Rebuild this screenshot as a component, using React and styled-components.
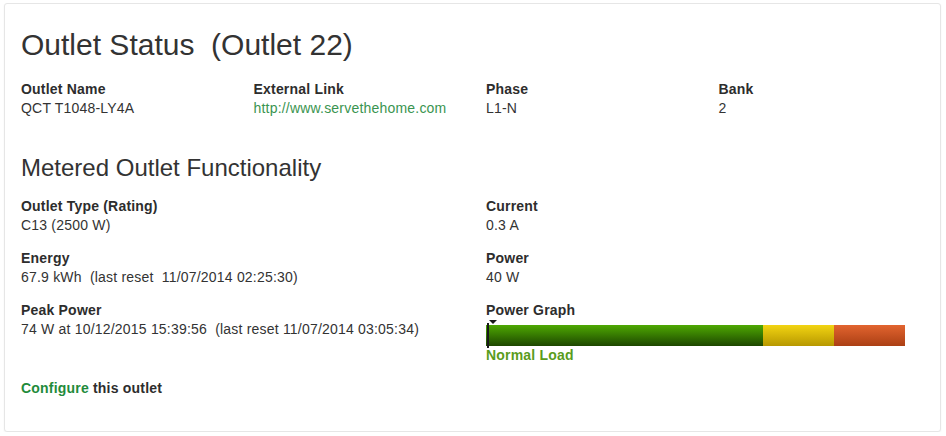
import React from "react";
import styled, { createGlobalStyle } from "styled-components";

const GlobalStyle = createGlobalStyle`
  html, body {
    margin: 0;
    padding: 0;
    background: #fff;
  }
  body {
    font-family: "Liberation Sans", Arial, sans-serif;
    font-size: 14px;
    color: #333;
  }
`;

const topFields = [
  { label: "Outlet Name", value: "QCT T1048-LY4A" },
  { label: "External Link", value: "http://www.servethehome.com", link: true },
  { label: "Phase", value: "L1-N" },
  { label: "Bank", value: "2" },
];

const leftFields = [
  { label: "Outlet Type (Rating)", value: "C13 (2500 W)" },
  { label: "Energy", value: "67.9 kWh\u00a0 (last reset\u00a0 11/07/2014 02:25:30)" },
  { label: "Peak Power", value: "74 W at 10/12/2015 15:39:56\u00a0 (last reset 11/07/2014 03:05:34)" },
];

const rightFields = [
  { label: "Current", value: "0.3 A" },
  { label: "Power", value: "40 W" },
];

const segments = [
  { width: 277, top: "#4ea802", bottom: "#1d4700" },
  { width: 71, top: "#f2d412", bottom: "#b79800" },
  { width: 71, top: "#e2642f", bottom: "#ab3f14" },
];

const App = () => {
  return (
    <>
      <GlobalStyle />
      <Panel>
        <Title>Outlet Status&nbsp; (Outlet 22)</Title>
        <TopGrid>
          {topFields.map((f) => (
            <Field key={f.label}>
              <Label>{f.label}</Label>
              {f.link ? <Link href="#">{f.value}</Link> : <Value>{f.value}</Value>}
            </Field>
          ))}
        </TopGrid>

        <Subtitle>Metered Outlet Functionality</Subtitle>
        <MeterGrid>
          <Column>
            {leftFields.map((f) => (
              <Field key={f.label}>
                <Label>{f.label}</Label>
                <Value>{f.value}</Value>
              </Field>
            ))}
          </Column>
          <Column>
            {rightFields.map((f) => (
              <Field key={f.label}>
                <Label>{f.label}</Label>
                <Value>{f.value}</Value>
              </Field>
            ))}
            <Field>
              <Label>Power Graph</Label>
              <Graph>
                {segments.map((s, i) => (
                  <Segment key={i} $w={s.width} $top={s.top} $bottom={s.bottom} />
                ))}
                <Needle />
                <Pointer />
              </Graph>
              <LoadText>Normal Load</LoadText>
            </Field>
          </Column>
        </MeterGrid>

        <Configure>
          <ConfigLink href="#">Configure</ConfigLink> this outlet
        </Configure>
      </Panel>
    </>
  );
};

const Panel = styled.div`
  box-sizing: border-box;
  width: 937px;
  height: 429px;
  margin: 3px 0 0 4px;
  padding: 24px 16px 0;
  border: 1px solid #e6e6e6;
  border-radius: 3px;
  box-shadow: 0 1px 2px rgba(0, 0, 0, 0.05);
  background: #fff;
`;

const Title = styled.h2`
  margin: 0 0 19px;
  font-size: 30px;
  line-height: 33px;
  font-weight: normal;
  color: #333;
`;

const Subtitle = styled.h3`
  margin: 37px 0 16px;
  font-size: 24px;
  line-height: 26px;
  font-weight: normal;
  color: #333;
`;

const TopGrid = styled.div`
  display: grid;
  grid-template-columns: repeat(4, 232.5px);
`;

const MeterGrid = styled.div`
  display: grid;
  grid-template-columns: repeat(2, 465px);
`;

const Column = styled.div`
  display: flex;
  flex-direction: column;
  gap: 14px;
`;

const Field = styled.div`
  display: flex;
  flex-direction: column;
  align-items: flex-start;
  line-height: 19px;
  letter-spacing: 0.2px;
`;

const Label = styled.div`
  font-weight: bold;
  color: #2d2d2d;
`;

const Value = styled.div`
  color: #333;
  white-space: pre;
`;

const Link = styled.a`
  color: #3a9450;
  text-decoration: none;
`;

const Graph = styled.div`
  position: relative;
  display: flex;
  margin-top: 5px;
  height: 21px;
`;

const Segment = styled.div`
  width: ${(p) => p.$w}px;
  height: 100%;
  background: linear-gradient(${(p) => p.$top}, ${(p) => p.$bottom});
`;

const Needle = styled.div`
  position: absolute;
  left: 1px;
  top: -2px;
  width: 2px;
  height: 25px;
  background: #1a1a1a;
`;

const Pointer = styled.div`
  position: absolute;
  left: 3px;
  top: -5px;
  width: 0;
  height: 0;
  border-left: 4px solid transparent;
  border-right: 4px solid transparent;
  border-top: 4px solid #1a1a1a;
`;

const LoadText = styled.div`
  font-weight: bold;
  color: #5a9c1c;
`;

const Configure = styled.div`
  margin-top: 14px;
  line-height: 19px;
  letter-spacing: 0.2px;
  font-weight: bold;
  color: #2d2d2d;
`;

const ConfigLink = styled.a`
  color: #1f8b3b;
  text-decoration: none;
`;

export default App;
